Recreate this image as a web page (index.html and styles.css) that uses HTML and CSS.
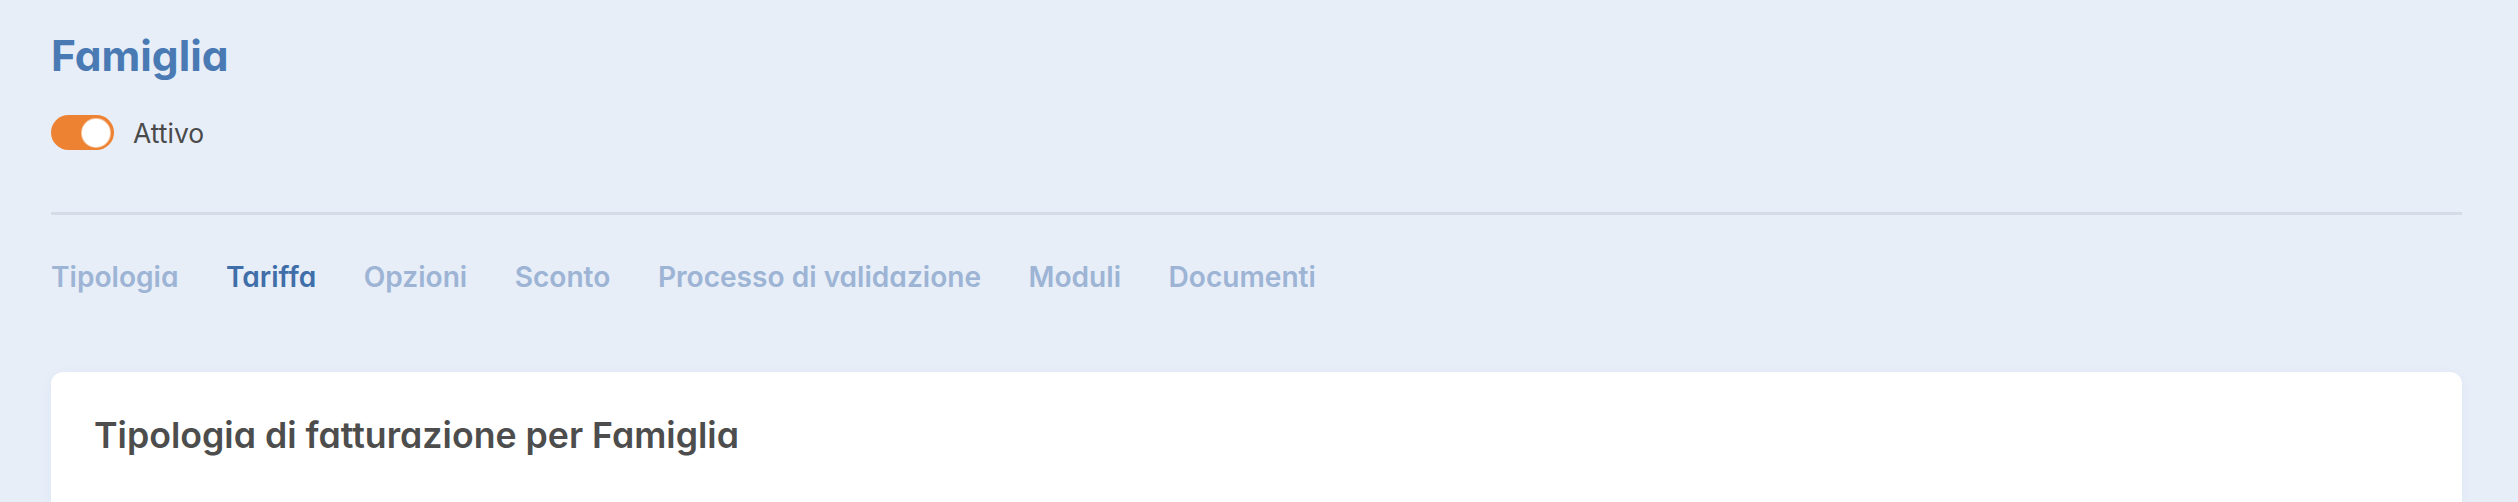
FILE: index.html
```html
<!DOCTYPE html>
<html lang="it">
<head>
    <meta charset="UTF-8">
    <meta name="viewport" content="width=device-width, initial-scale=1.0">
    <title>Famiglia - Tariffa</title>
    <link rel="stylesheet" href="styles.css">
</head>
<body>
    <div class="page">
        <header class="page-header">
            <h1 class="page-title">Famiglia</h1>
            <label class="status">
                <span class="switch is-on"><span class="switch-knob"></span></span>
                <span class="status-label">Attivo</span>
            </label>
        </header>

        <nav class="tabs">
            <a class="tab" href="#">Tipologia</a>
            <a class="tab active" href="#">Tariffa</a>
            <a class="tab" href="#">Opzioni</a>
            <a class="tab" href="#">Sconto</a>
            <a class="tab" href="#">Processo di validazione</a>
            <a class="tab" href="#">Moduli</a>
            <a class="tab" href="#">Documenti</a>
        </nav>

        <section class="card">
            <h2 class="card-title">Tipologia di fatturazione per Famiglia</h2>
        </section>
    </div>
</body>
</html>
```

FILE: styles.css
```css
:root {
    --bg-color: #e7eef8;
    --bg-light: #eef2fb;
    --title-color: #4a7ab4;
    --tab-color: #9db4d5;
    --tab-active: #3f6ea9;
    --divider: #d4dce8;
    --orange: #ee8233;
    --text-dark: #4d4d4d;
}

* {
    box-sizing: border-box;
}

body {
    margin: 0;
    background-color: var(--bg-color);
    font-family: Inter, "Open Sans", sans-serif;
    font-feature-settings: "cv11";
    color: var(--text-dark);
}

.page {
    min-height: 100vh;
    padding: 26px 56px 0 51px;
    overflow: hidden;
    background: linear-gradient(162.8deg, var(--bg-color) 96.6%, var(--bg-light) 96.6%);
}

.page-header {
    padding-bottom: 62px;
    border-bottom: 3px solid var(--divider);
}

.page-title {
    margin: 0;
    font-size: 42.5px;
    line-height: 60px;
    font-weight: 700;
    color: var(--title-color);
}

.status {
    display: flex;
    align-items: center;
    gap: 19px;
    margin-top: 29px;
}

.switch {
    display: flex;
    align-items: center;
    justify-content: flex-end;
    width: 63px;
    height: 35px;
    padding: 0 4px;
    border-radius: 18px;
    background: var(--orange);
}

.switch-knob {
    width: 28px;
    height: 28px;
    border-radius: 50%;
    background: #fff;
    box-shadow: 0 0 0 1px #f7c9a3;
}

.status-label {
    font-size: 26.5px;
    color: #4a4a4a;
}

.tabs {
    display: flex;
    gap: 47.5px;
    padding: 42px 0 0;
}

.tab {
    font-size: 28.1px;
    line-height: 40px;
    font-weight: 600;
    color: var(--tab-color);
    text-decoration: none;
}

.tab.active {
    color: var(--tab-active);
}

.card {
    margin-top: 75px;
    height: 200px;
    padding: 40px 43px;
    background: #fff;
    border-radius: 12px;
    box-shadow: 0 2px 10px rgba(120, 145, 190, 0.08);
}

.card-title {
    margin: 0;
    font-size: 35.7px;
    line-height: 46px;
    font-weight: 600;
    color: var(--text-dark);
}
```
